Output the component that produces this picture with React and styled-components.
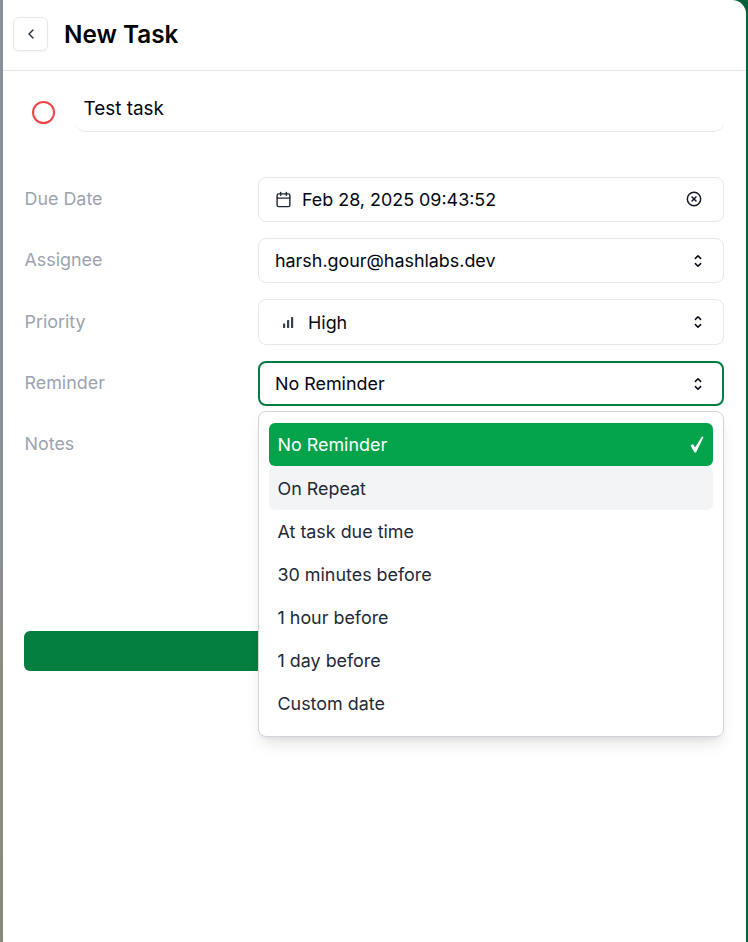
import React from "react";
import styled, { createGlobalStyle } from "styled-components";

const Global = createGlobalStyle`
  html, body { margin: 0; padding: 0; height: 100%; }
  body { font-family: Inter, "Liberation Sans", sans-serif; color: #030712; background: #fff; overflow: hidden; }
  * { box-sizing: border-box; }
`;

const Shell = styled.div`
  width: 748px;
  height: 942px;
  display: flex;
  padding: 0 2px 0 3px;
  background: linear-gradient(90deg, transparent 0 50%, #04603a 50% 100%),
    linear-gradient(180deg, #8b8f9b 0%, #8d8f96 60%, #8c8d80 72%, #868a7c 100%);
`;

const Panel = styled.main`
  flex: 1;
  background: #fff;
  border-top-right-radius: 14px;
  display: flex;
  flex-direction: column;
`;

const Header = styled.header`
  height: 71px;
  flex: none;
  border-bottom: 1px solid #e5e7eb;
  display: flex;
  align-items: center;
  gap: 16px;
  padding: 0 0 2px 10px;
`;

const BackButton = styled.button`
  width: 35px;
  height: 34px;
  padding: 0;
  display: flex;
  align-items: center;
  justify-content: center;
  background: #fff;
  border: 1px solid #e5e7eb;
  border-radius: 6px;
  box-shadow: 0 1px 2px rgba(0, 0, 0, 0.05);
  color: #1f2937;
`;

const Title = styled.h1`
  margin: 0;
  font-size: 24.3px;
  line-height: 32px;
  font-weight: 600;
  color: #000;
`;

const Body = styled.div`
  padding: 16px 22px 0 21px;
  display: flex;
  flex-direction: column;
`;

const TaskRow = styled.div`
  display: flex;
  align-items: flex-start;
  gap: 20px;
  height: 90px;
`;

const Circle = styled.span`
  flex: none;
  width: 23px;
  height: 23px;
  margin: 14px 0 0 8px;
  border: 2px solid #ef4444;
  border-radius: 50%;
`;

const TitleField = styled.div`
  flex: 1;
  height: 45px;
  padding: 0 9px 2px 8.5px;
  display: flex;
  align-items: center;
  font-size: 18.9px;
  color: #030712;
  border-bottom: 1px solid #e5e7eb;
  border-radius: 0 0 10px 10px;
`;

const Form = styled.div`
  position: relative;
  display: flex;
  flex-direction: column;
`;

const Row = styled.div`
  display: grid;
  grid-template-columns: 234px 466px;
  margin-bottom: ${(p) => p.$gap}px;
`;

const Label = styled.label`
  font-size: 17.9px;
  line-height: 24px;
  padding: ${(p) => p.$top || 10}px 0 0 0.5px;
  color: #9ca3af;
`;

const Field = styled.div`
  height: ${(p) => p.$height}px;
  display: flex;
  align-items: center;
  gap: ${(p) => p.$gap || 0}px;
  padding: 0 ${(p) => (p.$focus ? 19 : 20)}px 0 ${(p) => p.$left}px;
  font-size: 17.9px;
  color: #030712;
  background: #fff;
  border: ${(p) => (p.$focus ? "2px solid #047d3e" : "1px solid #e5e7eb")};
  border-radius: 8px;
`;

const FieldText = styled.span`
  flex: 1;
  white-space: nowrap;
`;

const NotesArea = styled.div`
  height: 193px;
  border: 1px solid #e5e7eb;
  border-radius: 8px;
`;

const SaveButton = styled.button`
  display: block;
  width: 700px;
  height: 40px;
  margin-top: 16px;
  border: 0;
  border-radius: 6px;
  background: #047f3f;
`;

const Menu = styled.ul`
  position: absolute;
  top: 234px;
  left: 234px;
  width: 466px;
  height: 326px;
  margin: 0;
  padding: 11px 10px;
  list-style: none;
  background: #fff;
  border: 1px solid #d1d5db;
  border-radius: 8px;
  box-shadow: 0 10px 15px -3px rgba(0, 0, 0, 0.1), 0 4px 6px -4px rgba(0, 0, 0, 0.1);
`;

const MenuItem = styled.li`
  height: ${(p) => (p.$state === "hover" ? 44 : 43)}px;
  padding: 0 9px 0 8.5px;
  display: flex;
  align-items: center;
  justify-content: space-between;
  font-size: 17.9px;
  border-radius: 6px;
  color: ${(p) => (p.$state === "selected" ? "#fff" : "#1f2937")};
  background: ${(p) =>
    p.$state === "selected" ? "#02a34b" : p.$state === "hover" ? "#f3f4f6" : "transparent"};
`;

const Updown = () => (
  <svg width="10" height="14" viewBox="0 0 10 14" fill="none" stroke="#030712" strokeWidth="1.5" strokeLinecap="round" strokeLinejoin="round" style={{ flex: "none" }}>
    <path d="M2.4 4.4 5 1.8 7.6 4.4" />
    <path d="M2.4 9.6 5 12.2 7.6 9.6" />
  </svg>
);

const CheckMark = () => (
  <svg width="14" height="17" viewBox="0 0 14 17" fill="#fff" style={{ flex: "none" }}>
    <path d="M0.5 9.5 3 8 5 11.5 12 0.5 13.5 1 6 16.5 4.5 16.5Z" />
  </svg>
);

const options = ["No Reminder", "On Repeat", "At task due time", "30 minutes before", "1 hour before", "1 day before", "Custom date"];

export default function App() {
  return (
    <>
      <Global />
      <Shell>
        <Panel>
          <Header>
            <BackButton aria-label="Back">
              <svg width="16" height="16" viewBox="0 0 24 24" fill="none" stroke="currentColor" strokeWidth="2" strokeLinecap="round" strokeLinejoin="round">
                <path d="m15 18-6-6 6-6" />
              </svg>
            </BackButton>
            <Title>New Task</Title>
          </Header>
          <Body>
            <TaskRow>
              <Circle />
              <TitleField>Test task</TitleField>
            </TaskRow>
            <Form>
              <Row $gap={16}>
                <Label>Due Date</Label>
                <Field $height={45} $left={16} $gap={10}>
                  <svg width="17" height="17" viewBox="0 0 24 24" fill="none" stroke="#1f2937" strokeWidth="2" strokeLinecap="round" strokeLinejoin="round" style={{ flex: "none" }}>
                    <path d="M8 2v4" />
                    <path d="M16 2v4" />
                    <rect width="18" height="18" x="3" y="4" rx="2" />
                    <path d="M3 10h18" />
                  </svg>
                  <FieldText>Feb 28, 2025 09:43:52</FieldText>
                  <svg width="16" height="16" viewBox="0 0 24 24" fill="none" stroke="#111827" strokeWidth="2.2" strokeLinecap="round" strokeLinejoin="round" style={{ flex: "none", margin: "0 1px 2px 0" }}>
                    <circle cx="12" cy="12" r="10" />
                    <path d="m15 9-6 6" />
                    <path d="m9 9 6 6" />
                  </svg>
                </Field>
              </Row>
              <Row $gap={16}>
                <Label>Assignee</Label>
                <Field $height={45} $left={16}>
                  <FieldText>harsh.gour@hashlabs.dev</FieldText>
                  <Updown />
                </Field>
              </Row>
              <Row $gap={16}>
                <Label $top={11}>Priority</Label>
                <Field $height={46} $left={21} $gap={12}>
                  <svg width="16" height="16" viewBox="0 0 16 16" fill="#374151" style={{ flex: "none" }}>
                    <rect x="3" y="9.5" width="2.2" height="4.5" rx="0.4" />
                    <rect x="7" y="6" width="2.2" height="8" rx="0.4" />
                    <rect x="11" y="3" width="2.2" height="11" rx="0.4" />
                  </svg>
                  <FieldText>High</FieldText>
                  <Updown />
                </Field>
              </Row>
              <Row $gap={16}>
                <Label>Reminder</Label>
                <Field $height={45} $left={15} $focus>
                  <FieldText>No Reminder</FieldText>
                  <Updown />
                </Field>
              </Row>
              <Row $gap={0}>
                <Label>Notes</Label>
                <NotesArea />
              </Row>
              <SaveButton aria-label="Save" />
              <Menu>
                {options.map((o, i) => (
                  <MenuItem key={o} $state={i === 0 ? "selected" : i === 1 ? "hover" : "idle"}>
                    {o}
                    {i === 0 && <CheckMark />}
                  </MenuItem>
                ))}
              </Menu>
            </Form>
          </Body>
        </Panel>
      </Shell>
    </>
  );
}
